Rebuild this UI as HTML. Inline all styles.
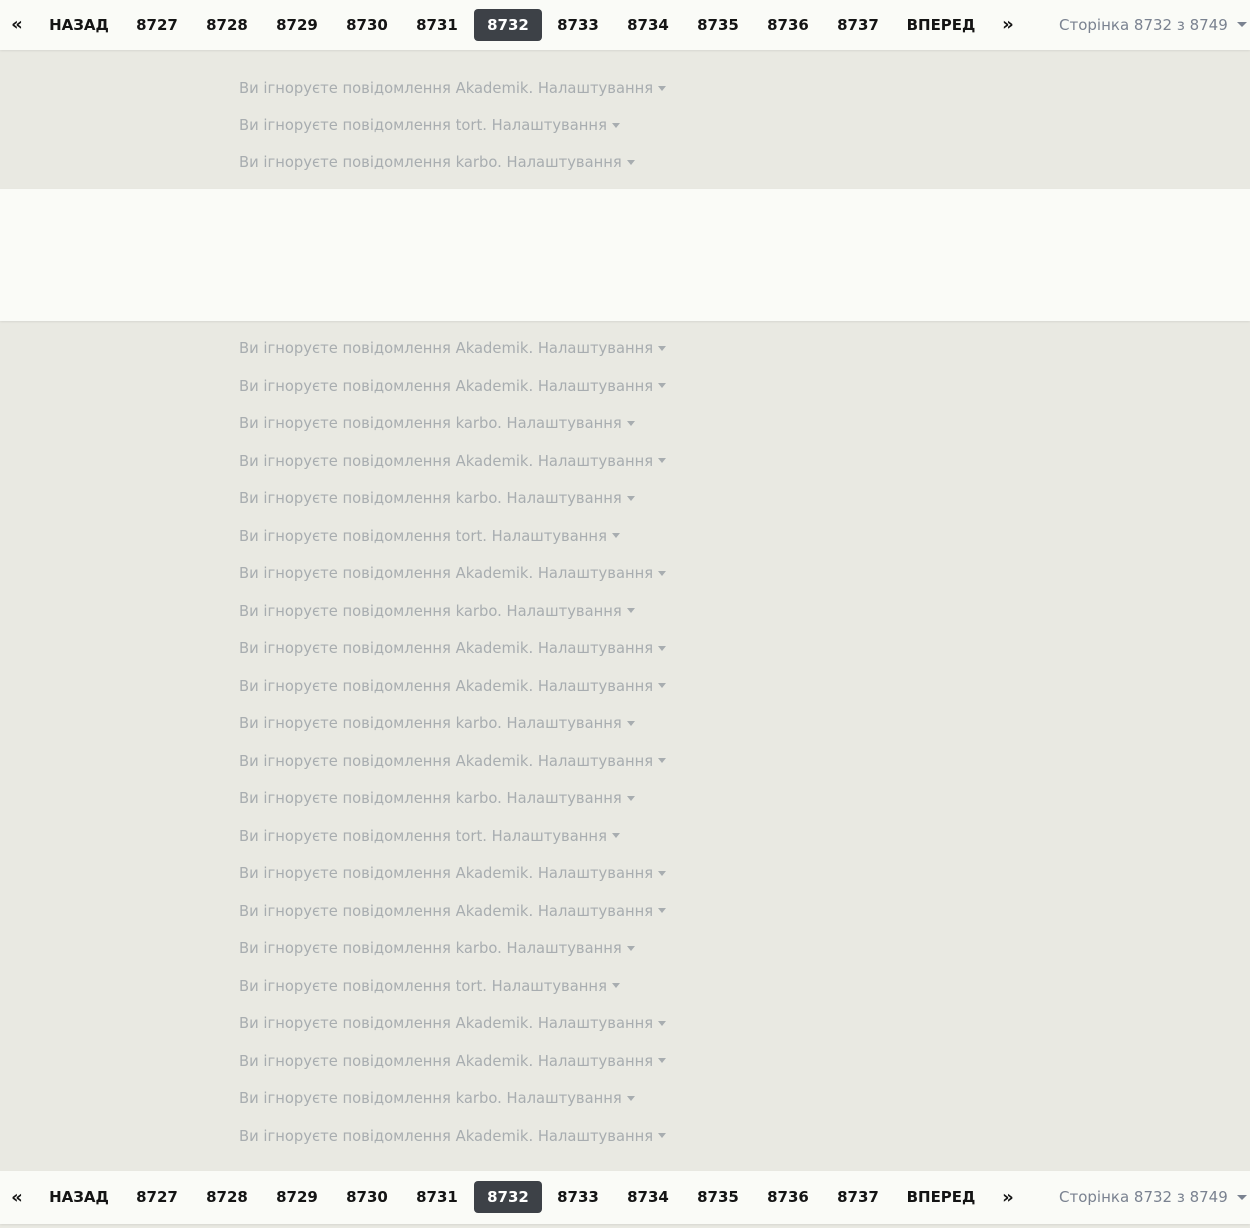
<!DOCTYPE html>
<html><head><meta charset="utf-8"><style>
html,body{margin:0;padding:0;}
body{width:1250px;height:1228px;background:#e9e9e2;position:relative;overflow:hidden;font-family:"DejaVu Sans","Liberation Sans",sans-serif;}
.bar{position:absolute;left:0;width:1250px;height:52px;background:#fafbf7;box-shadow:0 1px 2px rgba(0,0,0,.08);}
.bar span{position:absolute;top:0;line-height:50px;font-weight:bold;font-size:15px;color:#141414;transform:translateX(-50%);white-space:nowrap;}
.bar span.ar{font-size:18px;}
.bar .cur{top:9px;line-height:32px;height:32px;width:68px;text-align:center;background:#3d4147;color:#fff;border-radius:4px;transform:none;}
.bar .pg{font-weight:normal;color:#7a8290;transform:none;left:1059px;font-size:15px;}
.bar .tri{position:absolute;left:1237px;top:22px;width:0;height:0;border-left:5px solid transparent;border-right:5px solid transparent;border-top:5px solid #7a8290;}
.white{position:absolute;left:0;top:189px;width:1250px;height:132px;background:#fafbf7;box-shadow:0 1px 2px rgba(0,0,0,.08);}
.r{position:absolute;left:239px;font-size:14.75px;color:#a8adb0;white-space:nowrap;line-height:20px;margin-top:1px;}
.r i{display:inline-block;width:0;height:0;border-left:4.5px solid transparent;border-right:4.5px solid transparent;border-top:5px solid #a8adb0;vertical-align:middle;margin-left:5px;margin-top:-2px;}
</style></head><body>
<div class="bar" style="top:0;height:50px">
<span class="ar" style="left:17px">«</span><span style="left:79px">НАЗАД</span>
<span style="left:157px">8727</span><span style="left:227px">8728</span><span style="left:297px">8729</span><span style="left:367px">8730</span><span style="left:437px">8731</span>
<span class="cur" style="left:474px">8732</span>
<span style="left:578px">8733</span><span style="left:648px">8734</span><span style="left:718px">8735</span><span style="left:788px">8736</span><span style="left:858px">8737</span>
<span style="left:941px">ВПЕРЕД</span><span class="ar" style="left:1008px">»</span>
<span class="pg">Сторінка 8732 з 8749</span><div class="tri"></div>
</div>
<div class="r" style="top:78px">Ви ігноруєте повідомлення Akademik. Налаштування<i></i></div>
<div class="r" style="top:115px">Ви ігноруєте повідомлення tort. Налаштування<i></i></div>
<div class="r" style="top:152px">Ви ігноруєте повідомлення karbo. Налаштування<i></i></div>
<div class="white"></div>
<div class="r" style="top:338px">Ви ігноруєте повідомлення Akademik. Налаштування<i></i></div>
<div class="r" style="top:375.5px">Ви ігноруєте повідомлення Akademik. Налаштування<i></i></div>
<div class="r" style="top:413px">Ви ігноруєте повідомлення karbo. Налаштування<i></i></div>
<div class="r" style="top:450.5px">Ви ігноруєте повідомлення Akademik. Налаштування<i></i></div>
<div class="r" style="top:488px">Ви ігноруєте повідомлення karbo. Налаштування<i></i></div>
<div class="r" style="top:525.5px">Ви ігноруєте повідомлення tort. Налаштування<i></i></div>
<div class="r" style="top:563px">Ви ігноруєте повідомлення Akademik. Налаштування<i></i></div>
<div class="r" style="top:600.5px">Ви ігноруєте повідомлення karbo. Налаштування<i></i></div>
<div class="r" style="top:638px">Ви ігноруєте повідомлення Akademik. Налаштування<i></i></div>
<div class="r" style="top:675.5px">Ви ігноруєте повідомлення Akademik. Налаштування<i></i></div>
<div class="r" style="top:713px">Ви ігноруєте повідомлення karbo. Налаштування<i></i></div>
<div class="r" style="top:750.5px">Ви ігноруєте повідомлення Akademik. Налаштування<i></i></div>
<div class="r" style="top:788px">Ви ігноруєте повідомлення karbo. Налаштування<i></i></div>
<div class="r" style="top:825.5px">Ви ігноруєте повідомлення tort. Налаштування<i></i></div>
<div class="r" style="top:863px">Ви ігноруєте повідомлення Akademik. Налаштування<i></i></div>
<div class="r" style="top:900.5px">Ви ігноруєте повідомлення Akademik. Налаштування<i></i></div>
<div class="r" style="top:938px">Ви ігноруєте повідомлення karbo. Налаштування<i></i></div>
<div class="r" style="top:975.5px">Ви ігноруєте повідомлення tort. Налаштування<i></i></div>
<div class="r" style="top:1013px">Ви ігноруєте повідомлення Akademik. Налаштування<i></i></div>
<div class="r" style="top:1050.5px">Ви ігноруєте повідомлення Akademik. Налаштування<i></i></div>
<div class="r" style="top:1088px">Ви ігноруєте повідомлення karbo. Налаштування<i></i></div>
<div class="r" style="top:1125.5px">Ви ігноруєте повідомлення Akademik. Налаштування<i></i></div>
<div class="bar" style="top:1171px;height:53px">
<span class="ar" style="left:17px;line-height:53px">«</span><span style="left:79px;line-height:53px">НАЗАД</span>
<span style="left:157px;line-height:53px">8727</span><span style="left:227px;line-height:53px">8728</span><span style="left:297px;line-height:53px">8729</span><span style="left:367px;line-height:53px">8730</span><span style="left:437px;line-height:53px">8731</span>
<span class="cur" style="left:474px;top:10px">8732</span>
<span style="left:578px;line-height:53px">8733</span><span style="left:648px;line-height:53px">8734</span><span style="left:718px;line-height:53px">8735</span><span style="left:788px;line-height:53px">8736</span><span style="left:858px;line-height:53px">8737</span>
<span style="left:941px;line-height:53px">ВПЕРЕД</span><span class="ar" style="left:1008px;line-height:53px">»</span>
<span class="pg" style="line-height:53px">Сторінка 8732 з 8749</span><div class="tri" style="top:24px"></div>
</div>
</body></html>
